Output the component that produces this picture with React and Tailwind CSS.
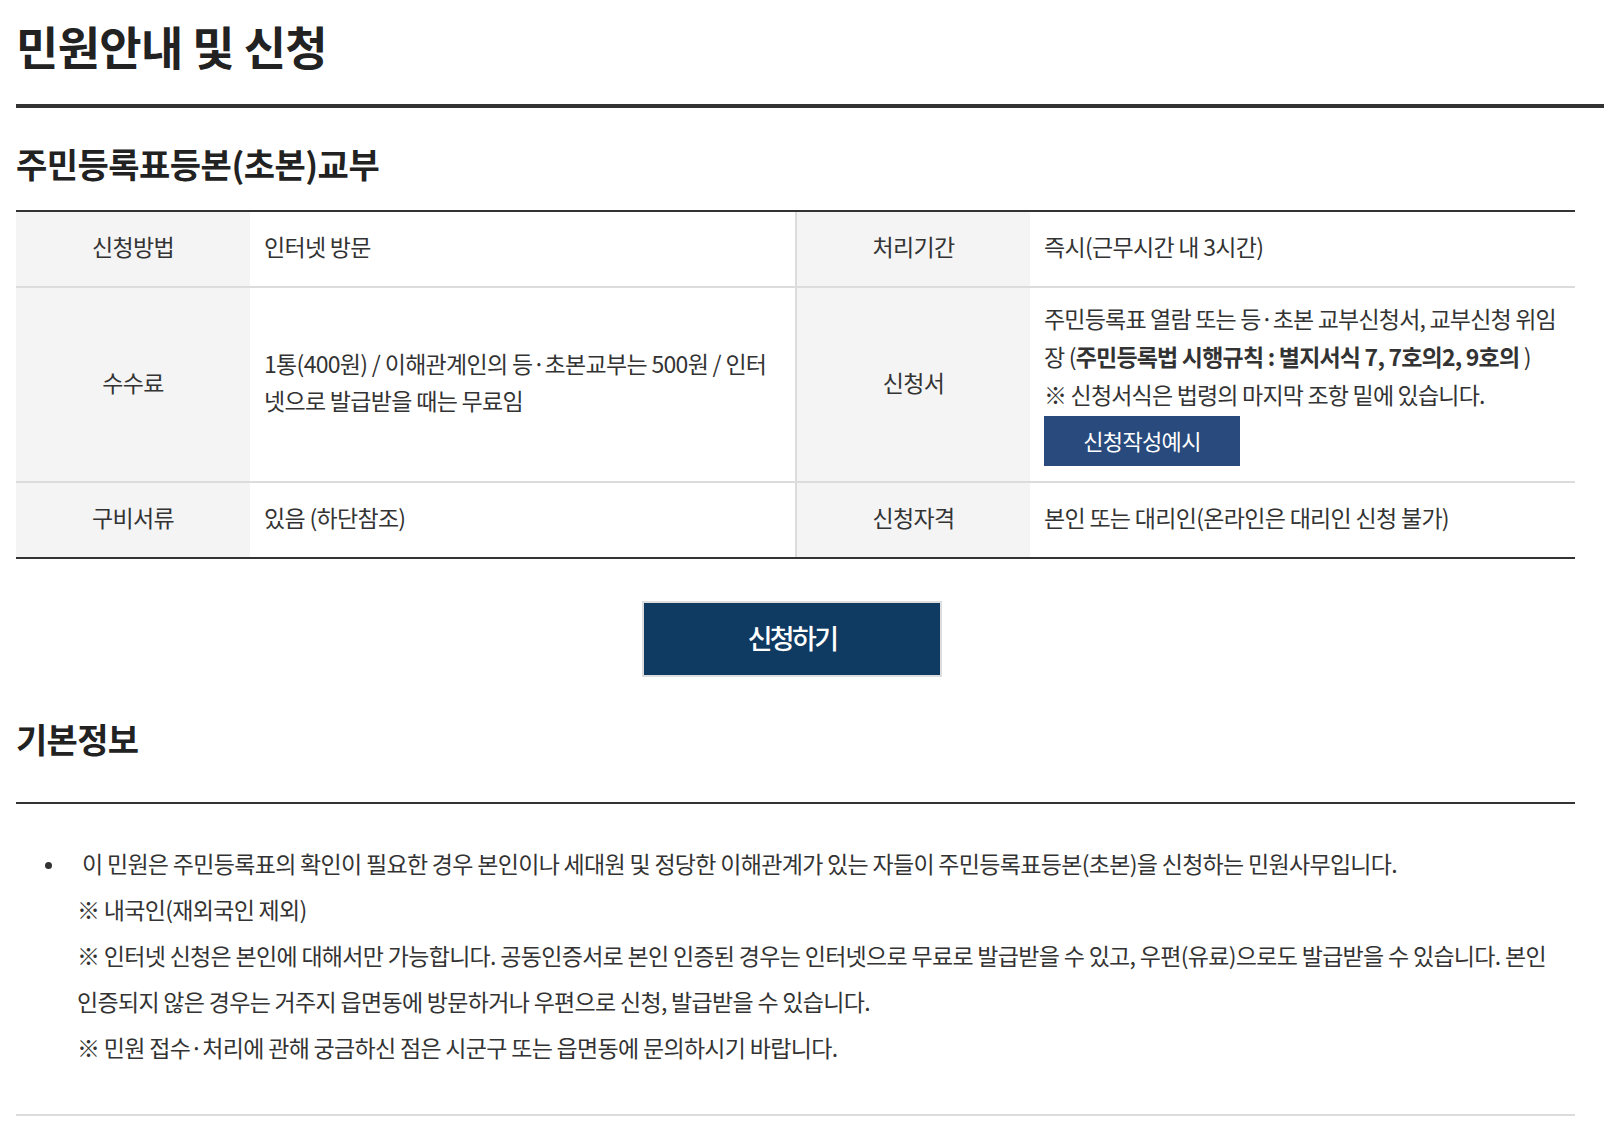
import React from "react";

function Label({ children, divider }) {
  return (
    <div
      className={
        "flex items-center justify-center bg-[#f4f4f4] pb-[6px] text-center " +
        (divider ? "border-l-2 border-[#dcdcdc]" : "")
      }
    >
      {children}
    </div>
  );
}

function Value({ children, className = "" }) {
  return <div className={"flex items-center px-[14px] " + className}>{children}</div>;
}

export default function App() {
  return (
    <div className="min-h-[1132px] bg-white pl-4 text-[#333] font-['Noto_Sans_CJK_KR','Noto_Sans',sans-serif]">
      <h1 className="pt-[17px] text-[46px] font-bold leading-[56px] tracking-[-0.015em] text-[#222]">
        민원안내 및 신청
      </h1>
      <div className="mt-[31px] h-[4px] bg-[#333]" />

      <div className="mr-[29px]">
        <h2 className="mt-[34px] text-[34px] font-bold leading-[44px] tracking-[-0.015em] text-[#222]">
          주민등록표등본(초본)교부
        </h2>

        <div className="mt-[24px] border-y-2 border-[#333] text-[23px] leading-[38px] tracking-[-0.03em]">
          <div className="grid grid-cols-[234px_545px_235px_1fr] border-b-2 border-[#dcdcdc]">
            <Label>신청방법</Label>
            <Value className="pt-[15px] pb-[21px]">인터넷 방문</Value>
            <Label divider>처리기간</Label>
            <Value className="pt-[15px] pb-[21px]">즉시(근무시간 내 3시간)</Value>
          </div>

          <div className="grid grid-cols-[234px_545px_235px_1fr] border-b-2 border-[#dcdcdc]">
            <Label>수수료</Label>
            <Value className="pb-[6px]">
              <p className="whitespace-nowrap leading-[37px]">
                1통(400원) / 이해관계인의 등·초본교부는 500원 / 인터
                <br />
                넷으로 발급받을 때는 무료임
              </p>
            </Value>
            <Label divider>신청서</Label>
            <div className="px-[14px] pt-[11px] pb-[15px]">
              <p className="whitespace-nowrap tracking-[-0.035em]">
                주민등록표 열람 또는 등·초본 교부신청서, 교부신청 위임
                <br />장 (<span className="font-bold">주민등록법 시행규칙 : 별지서식 7, 7호의2, 9호의</span> )
                <br />※ 신청서식은 법령의 마지막 조항 밑에 있습니다.
              </p>
              <button
                type="button"
                className="mt-[3px] flex h-[50px] w-[196px] items-center justify-center bg-[#294a7c] pb-[2px] text-[22px] tracking-[-0.03em] text-white"
              >
                신청작성예시
              </button>
            </div>
          </div>

          <div className="grid grid-cols-[234px_545px_235px_1fr]">
            <Label>구비서류</Label>
            <Value className="pt-[15px] pb-[21px]">있음 (하단참조)</Value>
            <Label divider>신청자격</Label>
            <Value className="pt-[15px] pb-[21px]">본인 또는 대리인(온라인은 대리인 신청 불가)</Value>
          </div>
        </div>

        <button
          type="button"
          className="ml-[626px] mt-[42px] flex h-[76px] w-[300px] items-center justify-center border-2 border-[#dddddd] bg-[#0f3a62] pb-[2px] text-[27px] font-medium tracking-[-0.1em] text-white"
        >
          신청하기
        </button>

        <h2 className="mt-[40px] text-[34px] font-bold leading-[44px] tracking-[-0.02em] text-[#222]">
          기본정보
        </h2>
        <div className="mt-[41px] h-[2px] bg-[#333]" />

        <div className="mt-[36px] flex text-[23px] leading-[46px] tracking-[-0.03em]">
          <div className="w-[61px] shrink-0 pl-[29px] pt-[22px]">
            <span className="block h-[7px] w-[7px] rounded-full bg-[#333]" />
          </div>
          <div className="whitespace-nowrap">
            <p className="pl-[5px]">
              이 민원은 주민등록표의 확인이 필요한 경우 본인이나 세대원 및 정당한 이해관계가 있는 자들이 주민등록표등본(초본)을 신청하는 민원사무입니다.
            </p>
            <p>※ 내국인(재외국인 제외)</p>
            <p>
              ※ 인터넷 신청은 본인에 대해서만 가능합니다. 공동인증서로 본인 인증된 경우는 인터넷으로 무료로 발급받을 수 있고, 우편(유료)으로도 발급받을 수 있습니다. 본인
              <br />
              인증되지 않은 경우는 거주지 읍면동에 방문하거나 우편으로 신청, 발급받을 수 있습니다.
            </p>
            <p>※ 민원 접수·처리에 관해 궁금하신 점은 시군구 또는 읍면동에 문의하시기 바랍니다.</p>
          </div>
        </div>

        <div className="mt-[44px] h-[2px] bg-[#dcdcdc]" />
      </div>
    </div>
  );
}
